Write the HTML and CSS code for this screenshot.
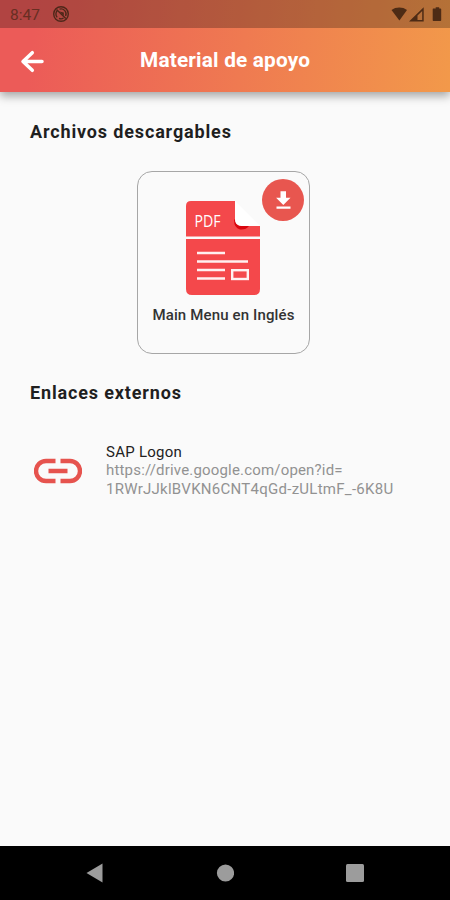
FILE: index.html
```html
<!DOCTYPE html>
<html lang="es">
<head>
<meta charset="utf-8">
<title>Material de apoyo</title>
<link rel="stylesheet" href="styles.css">
</head>
<body>
<div class="screen">
  <header class="top">
    <div class="status">
      <span class="clock">8:47</span>
      <svg class="status-app" width="18" height="18" viewBox="0 0 18 18"><circle cx="9" cy="9" r="7.300" fill="none" stroke="currentColor" stroke-width="1.400"/><path d="M5.200 12.400A5 5 0 0 1 5.600 5.300M7.500 4.200A5 5 0 0 1 13.600 11M11.500 13.200A5 5 0 0 1 7 13.400M4.500 4.500 13.800 13.500" fill="none" stroke="currentColor" stroke-width="1.400"/><path d="M7.500 6.500 11.800 7.500V11z" fill="currentColor"/></svg>
      <svg class="status-icons" width="52" height="16" viewBox="0 0 52 16"><path d="M1.500 3.900C5.800.6 12.700.6 17 3.900L9.400 14.500z" fill="currentColor"/><path fill-rule="evenodd" d="M19 15.500 33.700 1.300V15.500zm8.500-1.500h4.700V5l-4.700 4.500z" fill="currentColor"/><path d="M43.700 2.600h2V1.300h3.500v1.300h1.200q.8 0 .8.700v11q0 .8-.8.800h-6.900q-.8 0-.8-.8V3.300q0-.7.500-.7z" fill="currentColor"/></svg>
    </div>
    <div class="appbar">
      <svg class="back" width="26" height="26" viewBox="0 0 26 26"><path d="M13.300 5.700 4 14.500l9.300 8.800M4.300 14.500H23" fill="none" stroke="#fff" stroke-width="3.500" stroke-linejoin="round" stroke-linecap="round"/></svg>
      <h1>Material de apoyo</h1>
    </div>
  </header>
  <main>
    <h2 class="files-title">Archivos descargables</h2>
    <article class="card">
      <svg class="pdf" width="74" height="94" viewBox="0 0 74 94">
        <path d="M5 0H49V18Q49 25 56 25H74V35.500H0V5Q0 0 5 0zM0 38H74V88Q74 94 68 94H6Q0 94 0 88z" fill="#f4484b"/>
        <path d="M48 19Q48 27 54 28.500Q60 29 63 25H56Q49 25 49 18z" fill="#d9060e"/>
        <path d="M49 0V18Q49 25 56 25H74z" fill="#fff"/>
        <path d="M11 52h28M11 60.500h51M11 69h28M11 77.500h28" fill="none" stroke="#fff0f0" stroke-width="2.500"/>
        <rect x="46.200" y="69.200" width="15.600" height="8.800" fill="none" stroke="#fff0f0" stroke-width="2.400"/>
        <text class="pdf-label" x="8.500" y="25.500" textLength="26" lengthAdjust="spacingAndGlyphs">PDF</text>
      </svg>
      <p>Main Menu en Inglés</p>
      <span class="download"><svg width="42" height="42" viewBox="0 0 42 42"><path d="M18.500 12.200h5.500v6.500h4.500l-7.200 7.200-7.200-7.200h4.400zM14.500 27.500h14v2.200h-14z" fill="#fff"/></svg></span>
    </article>
    <h2 class="links-title">Enlaces externos</h2>
    <div class="link">
      <svg class="chain" width="48" height="26" viewBox="0 0 48 26"><path d="M21.500 3H12A10 10 0 0 0 12 23H21.500M26.500 3H36A10 10 0 0 1 36 23H26.500M14.500 13H33.500" fill="none" stroke="#e6534e" stroke-width="4.400"/></svg>
      <div class="link-text">
        <p class="name">SAP Logon</p>
        <p class="url">https://drive.google.com/open?id=</p>
        <p class="url second">1RWrJJklBVKN6CNT4qGd-zULtmF_-6K8U</p>
      </div>
    </div>
  </main>
  <nav>
    <svg width="18" height="20" viewBox="0 0 18 20"><path d="M.5 10 16.500.5v19z" fill="#9c9c9c"/></svg>
    <svg width="18" height="20" viewBox="0 0 18 20"><circle cx="9.500" cy="10" r="8.600" fill="#9c9c9c"/></svg>
    <svg width="18" height="20" viewBox="0 0 18 20"><rect y="1" width="18" height="18" rx="1.500" fill="#9c9c9c"/></svg>
  </nav>
</div>
</body>
</html>
```
FILE: styles.css
```css
* { box-sizing: border-box; }
body { margin: 0; font-family: Roboto, "Liberation Sans", sans-serif; }
h1, h2, p { margin: 0; white-space: nowrap; }
svg { display: block; flex: none; }
.screen { width: 450px; height: 900px; display: flex; flex-direction: column; background: #fafafa; overflow: hidden; }
.top { height: 92px; background: linear-gradient(97deg, #ec5b58 8%, #f2994a 100%); box-shadow: 0 4px 9px rgba(0,0,0,.35); }
.status { height: 28px; display: flex; align-items: center; padding: 0 8px 0 10px; background: rgba(0,0,0,.25); color: #4d2719; }
.clock { width: 42px; padding-top: 2px; font-size: 15.500px; line-height: 26px; color: #682e22; }
.status-icons { margin-left: auto; color: #4d2b15; }
.appbar { height: 64px; display: flex; align-items: center; padding-left: 19px; }
h1 { margin-left: 95px; color: #fff; font-size: 20.800px; line-height: 28px; font-weight: 700; letter-spacing: .18px; }
main { flex: 1; padding: 28px 30px 0; }
h2 { font-size: 18px; line-height: 24px; font-weight: 700; color: #1f1f1f; letter-spacing: .85px; }
.card { position: relative; width: 173px; height: 183px; margin: 27px 0 0 107px; padding: 29px 0 0; border: 1px solid #a6a6a6; border-radius: 15px; }
.pdf { margin-left: 48px; }
.pdf-label { font: 16px "Open Sans", sans-serif; fill: #fff; }
.card p { margin-top: 10px; text-align: center; font-size: 15px; line-height: 20px; font-weight: 500; color: #333; letter-spacing: .14px; }
.download { position: absolute; top: 7px; right: 5px; width: 42px; height: 42px; border-radius: 50%; background: #e8564f; }
.links-title { margin-top: 27px; }
.link { display: flex; align-items: center; margin-top: 38px; padding-left: 4px; }
.link-text { margin-left: 24px; font-size: 15px; line-height: 18.400px; }
.name { color: #222; letter-spacing: .25px; }
.url { color: #929292; letter-spacing: .18px; }
.second { letter-spacing: .27px; }
nav { height: 54px; display: flex; justify-content: space-between; align-items: center; padding: 0 86px; background: #000; }
```
